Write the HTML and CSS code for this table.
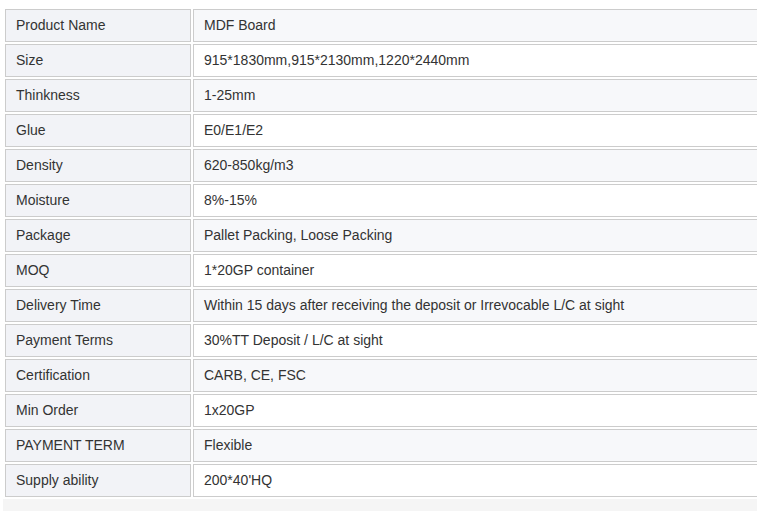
FILE: index.html
```html
<!DOCTYPE html>
<html>
<head>
<meta charset="utf-8">
<link rel="stylesheet" href="styles.css">
</head>
<body>
<div class="wrap">
<table class="spec">
<tbody>
<tr><td class="k">Product Name</td><td class="v">MDF Board</td></tr>
<tr><td class="k">Size</td><td class="v">915*1830mm,915*2130mm,1220*2440mm</td></tr>
<tr><td class="k">Thinkness</td><td class="v">1-25mm</td></tr>
<tr><td class="k">Glue</td><td class="v">E0/E1/E2</td></tr>
<tr><td class="k">Density</td><td class="v">620-850kg/m3</td></tr>
<tr><td class="k">Moisture</td><td class="v">8%-15%</td></tr>
<tr><td class="k">Package</td><td class="v">Pallet Packing, Loose Packing</td></tr>
<tr><td class="k">MOQ</td><td class="v">1*20GP container</td></tr>
<tr><td class="k">Delivery Time</td><td class="v">Within 15 days after receiving the deposit or Irrevocable L/C at sight</td></tr>
<tr><td class="k">Payment Terms</td><td class="v">30%TT Deposit / L/C at sight</td></tr>
<tr><td class="k">Certification</td><td class="v">CARB, CE, FSC</td></tr>
<tr><td class="k">Min Order</td><td class="v">1x20GP</td></tr>
<tr><td class="k">PAYMENT TERM</td><td class="v">Flexible</td></tr>
<tr><td class="k">Supply ability</td><td class="v">200*40'HQ</td></tr>
</tbody>
</table>
<div class="after"></div>
</div>
</body>
</html>
```
FILE: styles.css
```css
html, body {
  margin: 0;
  padding: 0;
  background: #fff;
  overflow: hidden;
}
.wrap {
  padding: 7px 0 0 3px;
  overflow: hidden;
}
.spec {
  border-collapse: separate;
  border-spacing: 2px;
  width: 800px;
  font-family: "Liberation Sans", Arial, sans-serif;
  font-size: 14px;
  color: #333;
}
.spec td {
  border: 1px solid #ccc;
  padding: 0 10px;
  height: 31px;
  line-height: 31px;
  white-space: nowrap;
  box-sizing: content-box;
}
.spec td.k {
  width: 164px;
  background: #f2f3f7;
}
.spec tr:nth-child(odd) td.v {
  background: #f7f8fa;
}
.spec tr:nth-child(even) td.v {
  background: #fff;
}
.after {
  height: 20px;
  width: 800px;
  background: #f5f5f5;
}
```
